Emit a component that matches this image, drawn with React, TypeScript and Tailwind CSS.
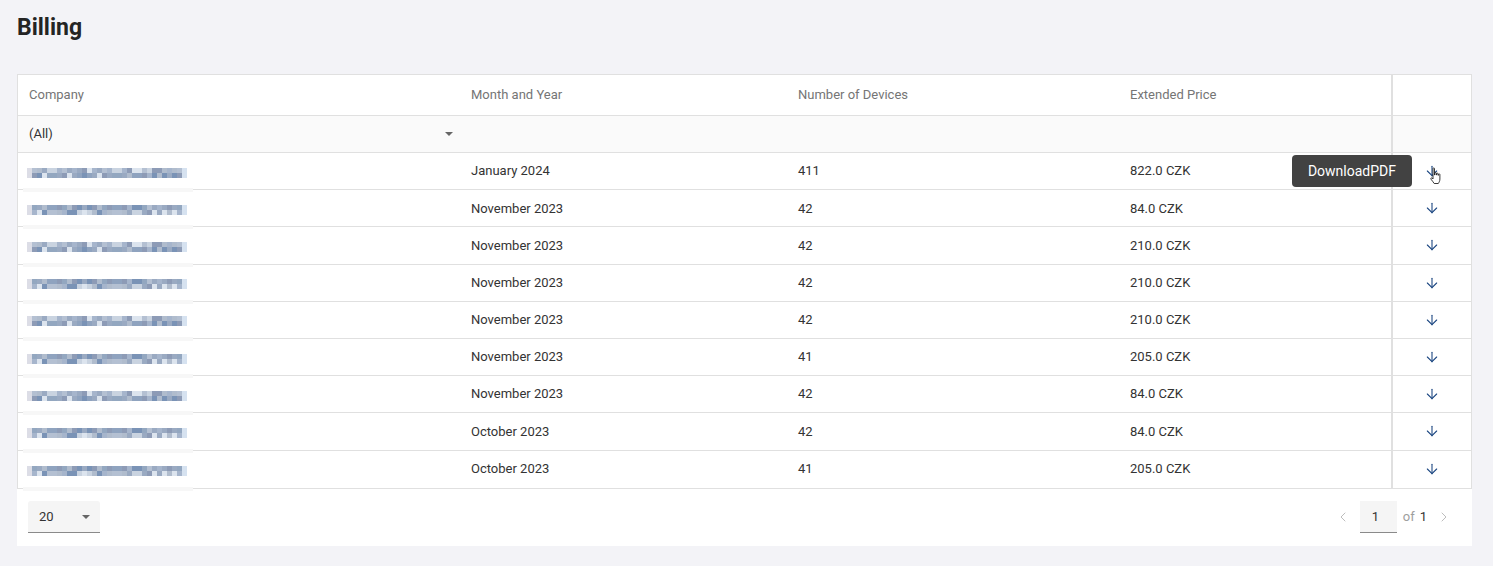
import React from 'react'
import { ArrowDown, ChevronLeft, ChevronRight } from 'lucide-react'

const rows = [
    { month: 'January 2024', devices: '411', price: '822.0 CZK', v: 0 },
    { month: 'November 2023', devices: '42', price: '84.0 CZK', v: 1 },
    { month: 'November 2023', devices: '42', price: '210.0 CZK', v: 0 },
    { month: 'November 2023', devices: '42', price: '210.0 CZK', v: 1 },
    { month: 'November 2023', devices: '42', price: '210.0 CZK', v: 0 },
    { month: 'November 2023', devices: '41', price: '205.0 CZK', v: 1 },
    { month: 'November 2023', devices: '42', price: '84.0 CZK', v: 0 },
    { month: 'October 2023', devices: '42', price: '84.0 CZK', v: 1 },
    { month: 'October 2023', devices: '41', price: '205.0 CZK', v: 1 },
]

const palette = ['#8fa3bf', '#a6b5cc', '#7a93b6', '#b4c0d2', '#9aaac2', '#c9d3e0', '#8d9bb6', '#dce4ee', '#93a7c0', '#b0bccd']
const light = ['#ffffff', '#eef1f6', '#e3e9f1', '#f4f4f6', '#dde5ee']

// blurred company name, drawn as pixel blocks
function Blur({ seed }: { seed: number }) {
    const cells = (row: number) =>
        Array.from({ length: 32 }, (_, i) => {
            const n = (i * 7 + row * 13 + seed * 5 + ((i * i * 3) % 17)) % 97
            if (row === 0) return n % 5 === 0 ? light[n % light.length] : 'transparent'
            if (i === 0) return '#dcdde6'
            if (i === 31) return '#d6e2f0'
            return palette[n % palette.length]
        })
    return (
        <div className="flex flex-col -mt-[2px]">
            {[0, 1, 2].map((r) => (
                <div key={r} className="flex">
                    {cells(r).map((c, i) => (
                        <div key={i} className="w-[5px] h-[5px]" style={{ background: c }} />
                    ))}
                </div>
            ))}
        </div>
    )
}

const grid = 'grid grid-cols-[442px_327px_332px_272px_2px_1fr]'

export default function App() {
    return (
        <div className="min-h-[566px] bg-[#f3f3f7] px-[17px] pt-[13px] text-[13px] text-[#333]" style={{ fontFamily: 'Roboto, "Liberation Sans", sans-serif' }}>
            <h1 className="text-[23px] font-bold text-[#242424] leading-[30px]">Billing</h1>

            <div className="mt-[31px] bg-white w-[1455px]">
                <div className="border border-[#e0e0e0]">
                    {/* header */}
                    <div className={`${grid} h-[41px] items-center text-[#757575] border-b border-[#e0e0e0]`}>
                        <span className="pl-[11px]">Company</span>
                        <span className="pl-[11px]">Month and Year</span>
                        <span className="pl-[11px]">Number of Devices</span>
                        <span className="pl-[11px]">Extended Price</span>
                        <div className="h-full bg-[#e0e0e0]" />
                        <div />
                    </div>
                    {/* filter row */}
                    <div className={`${grid} h-[37px] items-center bg-[#fafafa] border-b border-[#e0e0e0]`}>
                        <div className="pl-[11px] pr-[7px] flex items-center justify-between">
                            <span>(All)</span>
                            <span className="w-0 h-0 border-l-[4px] border-r-[4px] border-t-[4px] border-l-transparent border-r-transparent border-t-[#666]" />
                        </div>
                        <div />
                        <div />
                        <div />
                        <div className="h-full bg-[#e0e0e0]" />
                        <div />
                    </div>
                    {/* data */}
                    {rows.map((r, i) => (
                        <div key={i} className={`${grid} h-[37.2px] items-center ${i < rows.length - 1 ? 'border-b border-[#e0e0e0]' : ''}`}>
                            <div className="h-full relative pl-[9px] flex items-center">
                                <Blur seed={r.v} />
                                <div className="absolute left-[5px] bottom-[-3px] w-[170px] h-[4px] bg-[#f7f7f7]" />
                            </div>
                            <span className="pl-[11px]">{r.month}</span>
                            <span className="pl-[11px]">{r.devices}</span>
                            <span className="pl-[11px]">{r.price}</span>
                            <div className="h-full bg-[#e0e0e0]" />
                            <div className="flex justify-center relative">
                                <ArrowDown size={16} strokeWidth={1.6} className="text-[#1a4580] -ml-[1px]" />
                                {i === 0 && (
                                    <>
                                        <div className="absolute right-[59px] top-[-8px] h-[32px] px-4 flex items-center bg-[#424242] text-white text-[14px] rounded-[4px] whitespace-nowrap">
                                            DownloadPDF
                                        </div>
                                        <svg className="absolute left-[36px] top-[4px]" width="14" height="18" viewBox="0 0 14 18">
                                            <path d="M4 1.5c0-.8 1.5-.8 1.5 0V8h.3V6.2c0-.8 1.5-.8 1.5 0V8h.3V6.8c0-.8 1.5-.8 1.5 0V8.3h.3V7.5c0-.8 1.5-.8 1.5 0v4.5c0 2.2-1 3.5-1.6 4.5H5.2c-.6-1-1.8-2.4-3.2-4.3-.6-.9.5-1.8 1.2-1.1L4 12V1.5z" fill="white" stroke="#222" strokeWidth="0.9" strokeLinejoin="round" />
                                        </svg>
                                    </>
                                )}
                            </div>
                        </div>
                    ))}
                </div>

                {/* pager */}
                <div className="h-[57px] flex items-center justify-between pl-[11px] pr-[20px]">
                    <div className="w-[72px] h-[32px] bg-[#f5f5f5] border-b border-[#8a8a8a] rounded-t-[3px] flex items-center justify-between pl-[11px] pr-[10px] text-[#333]">
                        <span>20</span>
                        <span className="w-0 h-0 border-l-[4px] border-r-[4px] border-t-[4px] border-l-transparent border-r-transparent border-t-[#666]" />
                    </div>
                    <div className="flex items-center">
                        <ChevronLeft size={16} strokeWidth={1.5} className="text-[#bdbdbd] mr-[9px]" />
                        <div className="w-[37px] h-[32px] bg-[#f5f5f5] border-b border-[#8a8a8a] flex items-center pl-[12px] text-[#333]">1</div>
                        <span className="ml-[6px] text-[#9e9e9e]">of</span>
                        <span className="ml-[5px] text-[#333]">1</span>
                        <ChevronRight size={16} strokeWidth={1.5} className="text-[#bdbdbd] ml-[9px]" />
                    </div>
                </div>
            </div>
        </div>
    )
}
